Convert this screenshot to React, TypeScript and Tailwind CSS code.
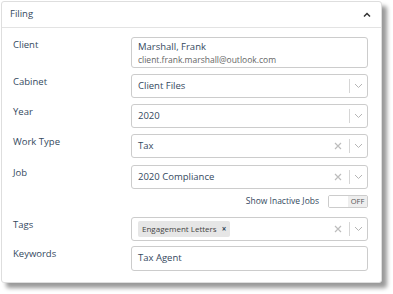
import React from "react";

const font = { fontFamily: '"Open Sans", "Liberation Sans", sans-serif' };

function Chevron() {
  return (
    <svg width="9" height="6" viewBox="0 0 9 6" className="text-[#b5b5b5]">
      <path d="M1 1l3.5 3.5L8 1" fill="none" stroke="currentColor" strokeWidth="1" />
    </svg>
  );
}

function Cross() {
  return (
    <svg width="8" height="8" viewBox="0 0 8 8" className="text-[#bdbdbd]">
      <path d="M1 1l6 6M7 1l-6 6" fill="none" stroke="currentColor" strokeWidth="1.2" />
    </svg>
  );
}

function Select({ value, clear, children }: { value?: string; clear?: boolean; children?: React.ReactNode }) {
  return (
    <div className="flex h-[24px] items-center rounded-[3px] border border-[#cccccc] bg-white">
      <div className="flex flex-1 items-center pl-[6px] text-[9.5px] text-[#34495e]">
        {children ?? value}
      </div>
      {clear && (
        <div className="flex w-[22px] items-center justify-center">
          <Cross />
        </div>
      )}
      <div className="h-[14px] w-px bg-[#d6d6d6]" />
      <div className="flex w-[17px] items-center justify-center">
        <Chevron />
      </div>
    </div>
  );
}

function Row({ label, children, mt }: { label: string; children: React.ReactNode; mt: string }) {
  return (
    <div className={`flex ${mt}`}>
      <div className="w-[118px] pt-[1px] text-[9.5px] text-[#34495e]">{label}</div>
      <div className="flex-1">{children}</div>
    </div>
  );
}

export default function App() {
  return (
    <div className="h-[294px] w-[393px] bg-white pl-[1px] pt-[1px]" style={font}>
      <div className="h-[282px] w-[381px] rounded-[3px] border border-[#dedede] bg-white shadow-[5px_5px_4px_rgba(0,0,0,0.4)]">
        <div className="flex h-[26px] items-center justify-between border-b border-[#e3e3e3] pl-[8px] pr-[10px]">
          <span className="text-[9.5px] text-[#34495e]">Filing</span>
          <svg width="8" height="6" viewBox="0 0 8 6">
            <path d="M1 4.5L4 1.5l3 3" fill="none" stroke="#333" strokeWidth="1.5" />
          </svg>
        </div>
        <div className="pl-[11px] pr-[13px] pt-[9px]">
          <Row label="Client" mt="mt-0">
            <div className="h-[31px] rounded-[3px] border border-[#cccccc] px-[6px] pt-[2px] leading-[13px]">
              <div className="text-[9.5px] text-[#34495e]">Marshall, Frank</div>
              <div className="text-[8.5px] text-[#666]">client.frank.marshall@outlook.com</div>
            </div>
          </Row>
          <Row label="Cabinet" mt="mt-[6px]">
            <Select value="Client Files" />
          </Row>
          <Row label="Year" mt="mt-[6px]">
            <Select value="2020" />
          </Row>
          <Row label="Work Type" mt="mt-[6px]">
            <Select value="Tax" clear />
          </Row>
          <Row label="Job" mt="mt-[7px]">
            <Select value="2020 Compliance" clear />
          </Row>
          <div className="mt-[6px] flex items-center justify-end gap-[9px]">
            <span className="text-[8.5px] text-[#34495e]">Show Inactive Jobs</span>
            <div className="flex h-[13px] w-[40px] overflow-hidden rounded-[2px] border border-[#cccccc]">
              <div className="flex-1 bg-white" />
              <div className="flex w-[19px] items-center justify-center bg-[#eeeeee] text-[7.5px] text-[#555]">OFF</div>
            </div>
          </div>
          <Row label="Tags" mt="mt-[9px]">
            <Select clear>
              <span className="flex h-[16px] items-center gap-[5px] rounded-[2px] bg-[#e6e6e6] px-[4px] text-[8px] text-[#444]">
                Engagement Letters
                <span className="text-[8px] font-bold text-[#34495e]">×</span>
              </span>
            </Select>
          </Row>
          <Row label="Keywords" mt="mt-[5px]">
            <div className="flex h-[25px] items-center rounded-[3px] border border-[#cccccc] pl-[6px] text-[9.5px] text-[#34495e]">
              Tax Agent
            </div>
          </Row>
        </div>
      </div>
    </div>
  );
}
